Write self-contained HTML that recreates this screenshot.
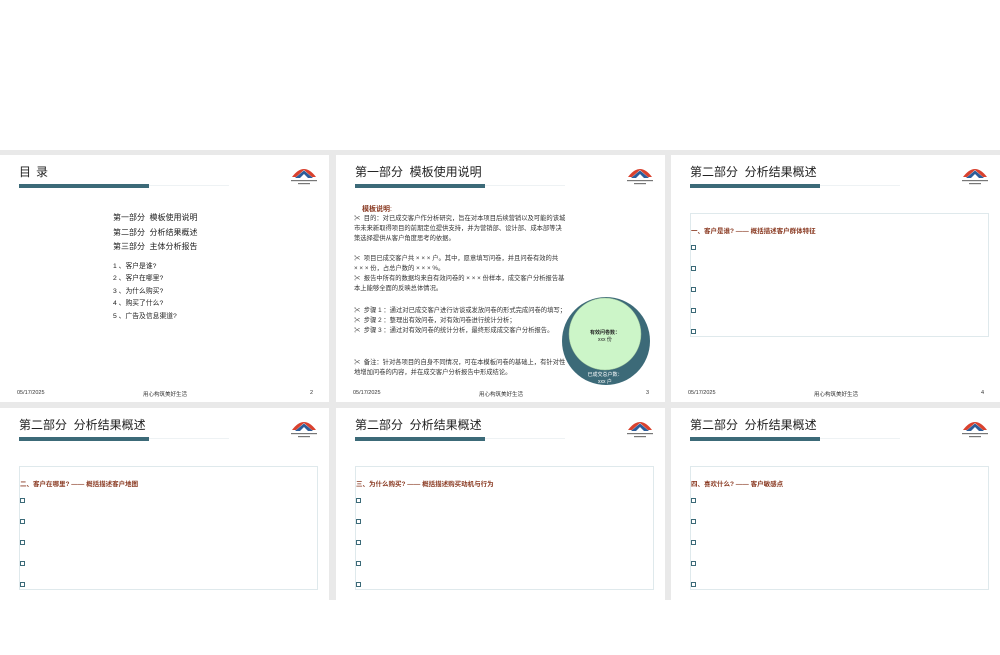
<!DOCTYPE html>
<html><head><meta charset="utf-8"><style>
*{margin:0;padding:0;box-sizing:border-box}
body{width:1000px;height:600px;background:#fff;position:relative;overflow:hidden;font-family:"Liberation Sans","Noto Sans CJK SC",sans-serif;color:#222}
.bg{position:absolute;left:0;top:150px;width:1000px;height:450px;background:#e9e9e9}
.s{position:absolute;width:329px;height:247px;background:#fff;overflow:hidden}
.t{position:absolute;left:19px;top:8px;font-size:12px;color:#222;white-space:nowrap}
.bar{position:absolute;left:19px;top:29px;width:130px;height:4px;background:#3c6a78}
.ln{position:absolute;left:149px;top:30px;width:80px;height:1px;background:#eef2f4}
.logo{position:absolute;left:289px;top:9px;width:30px;height:24px}
.f{position:absolute;top:235px;font-size:5.5px;color:#333}
.box{position:absolute;left:19px;top:58px;width:299px;height:124px;border:1px solid #dfe9ec}
.rt{position:absolute;left:0;top:11px;font-size:6.5px;color:#8a3a22;font-weight:bold;white-space:nowrap}
.sq{position:absolute;left:0;width:5px;height:5px;border:1.2px solid #3c6a78}
.p{position:absolute;left:18px;font-size:6.3px;line-height:10px;width:212px;color:#333}
</style></head><body>
<div class="bg"></div>

<svg width="0" height="0" style="position:absolute"><defs>
<g id="lg"><path d="M3 13 Q15 -3 27 13 L23 13 L15 6 L7 13Z" fill="#d9412e"/><path d="M6 14 L15 6.5 L24 14Z" fill="#2c5d9a"/><path d="M11 14 L15 10 L19 14Z" fill="#fff"/><rect x="2" y="16" width="26" height="1.2" fill="#777"/><rect x="9" y="19" width="12" height="1.2" fill="#777"/></g></defs></svg>

<!-- slide 1 -->
<div class="s" style="left:0;top:155px">
<div class="t" style="letter-spacing:5px">目录</div><div class="bar"></div><div class="ln"></div>
<svg class="logo" viewBox="0 0 30 24"><use href="#lg"/></svg>
<div style="position:absolute;left:113px;top:56px;font-size:8px;line-height:14.5px;white-space:nowrap">第一部分&nbsp; 模板使用说明<br>第二部分&nbsp; 分析结果概述<br>第三部分&nbsp; 主体分析报告</div>
<div style="position:absolute;left:113px;top:106px;font-size:6.8px;line-height:12.4px;white-space:nowrap">1 、客户是谁?<br>2 、客户在哪里?<br>3 、为什么购买?<br>4 、购买了什么?<br>5 、广告及信息渠道?</div>
<div class="f" style="left:17px">05/17/2025</div><div class="f" style="left:143px">用心构筑美好生活</div><div class="f" style="left:310px">2</div>
</div>

<!-- slide 2 -->
<div class="s" style="left:336px;top:155px">
<div class="t">第一部分&nbsp; 模板使用说明</div><div class="bar"></div><div class="ln"></div>
<svg class="logo" viewBox="0 0 30 24"><use href="#lg"/></svg>
<div style="position:absolute;left:26px;top:49px;font-size:7px;color:#8a3a22;font-weight:bold">模板说明<span style="font-weight:normal">:</span></div>
<div class="p" style="top:59px">✂&nbsp; 目的：对已成交客户作分析研究，旨在对本项目后续营销以及可能的该城市未来新取得项目的前期定位提供支持，并为营销部、设计部、成本部等决策选择提供从客户角度思考的依据。</div>
<div class="p" style="top:99px">✂&nbsp; 项目已成交客户共 ×&nbsp;×&nbsp;× 户。其中，愿意填写问卷，并且问卷有效的共 ×&nbsp;×&nbsp;× 份，占总户数的 ×&nbsp;×&nbsp;× %。<br>✂&nbsp; 报告中所有的数据均来自有效问卷的 ×&nbsp;×&nbsp;× 份样本，成交客户分析报告基本上能够全面的反映总体情况。</div>
<div class="p" style="top:151px">✂&nbsp; 步骤 1 ：通过对已成交客户进行访谈或发放问卷的形式完成问卷的填写；<br>✂&nbsp; 步骤 2 ：整理出有效问卷，对有效问卷进行统计分析；<br>✂&nbsp; 步骤 3 ：通过对有效问卷的统计分析，最终形成成交客户分析报告。</div>
<div class="p" style="top:203px">✂&nbsp; 备注：针对各项目的自身不同情况，可在本模板问卷的基础上，有针对性地增加问卷的内容，并在成交客户分析报告中形成结论。</div>
<svg style="position:absolute;left:224px;top:140px" width="92" height="92"><circle cx="46" cy="46" r="44" fill="#3c6a78"/><circle cx="45" cy="39" r="36" fill="#ccf5c8" stroke="#9bbf98" stroke-width=".5"/>
<text x="45" y="39" font-size="5" text-anchor="middle" fill="#222" font-weight="bold">有效问卷数：</text><text x="45" y="46" font-size="5" text-anchor="middle" fill="#222">xxx 份</text>
<text x="45" y="81" font-size="5" text-anchor="middle" fill="#fff">已成交总户数：</text><text x="45" y="88" font-size="5" text-anchor="middle" fill="#fff">xxx 户</text></svg>
<div class="f" style="left:17px">05/17/2025</div><div class="f" style="left:143px">用心构筑美好生活</div><div class="f" style="left:310px">3</div>
</div>

<!-- slide 3 -->
<div class="s" style="left:671px;top:155px">
<div class="t">第二部分&nbsp; 分析结果概述</div><div class="bar"></div><div class="ln"></div>
<svg class="logo" viewBox="0 0 30 24"><use href="#lg"/></svg>
<div class="box"><div class="rt">一、客户是谁? —— 概括描述客户群体特征</div>
<div class="sq" style="top:31px"></div><div class="sq" style="top:52px"></div><div class="sq" style="top:73px"></div><div class="sq" style="top:94px"></div><div class="sq" style="top:115px"></div></div>
<div class="f" style="left:17px">05/17/2025</div><div class="f" style="left:143px">用心构筑美好生活</div><div class="f" style="left:310px">4</div>
</div>

<!-- row 2 -->
<div class="s" style="left:0;top:408px">
<div class="t">第二部分&nbsp; 分析结果概述</div><div class="bar"></div><div class="ln"></div>
<svg class="logo" viewBox="0 0 30 24"><use href="#lg"/></svg>
<div class="box"><div class="rt">二、客户在哪里? —— 概括描述客户地图</div>
<div class="sq" style="top:31px"></div><div class="sq" style="top:52px"></div><div class="sq" style="top:73px"></div><div class="sq" style="top:94px"></div><div class="sq" style="top:115px"></div></div>
</div>
<div class="s" style="left:336px;top:408px">
<div class="t">第二部分&nbsp; 分析结果概述</div><div class="bar"></div><div class="ln"></div>
<svg class="logo" viewBox="0 0 30 24"><use href="#lg"/></svg>
<div class="box"><div class="rt">三、为什么购买? —— 概括描述购买动机与行为</div>
<div class="sq" style="top:31px"></div><div class="sq" style="top:52px"></div><div class="sq" style="top:73px"></div><div class="sq" style="top:94px"></div><div class="sq" style="top:115px"></div></div>
</div>
<div class="s" style="left:671px;top:408px">
<div class="t">第二部分&nbsp; 分析结果概述</div><div class="bar"></div><div class="ln"></div>
<svg class="logo" viewBox="0 0 30 24"><use href="#lg"/></svg>
<div class="box"><div class="rt">四、喜欢什么? —— 客户敏感点</div>
<div class="sq" style="top:31px"></div><div class="sq" style="top:52px"></div><div class="sq" style="top:73px"></div><div class="sq" style="top:94px"></div><div class="sq" style="top:115px"></div></div>
</div>
</body></html>
